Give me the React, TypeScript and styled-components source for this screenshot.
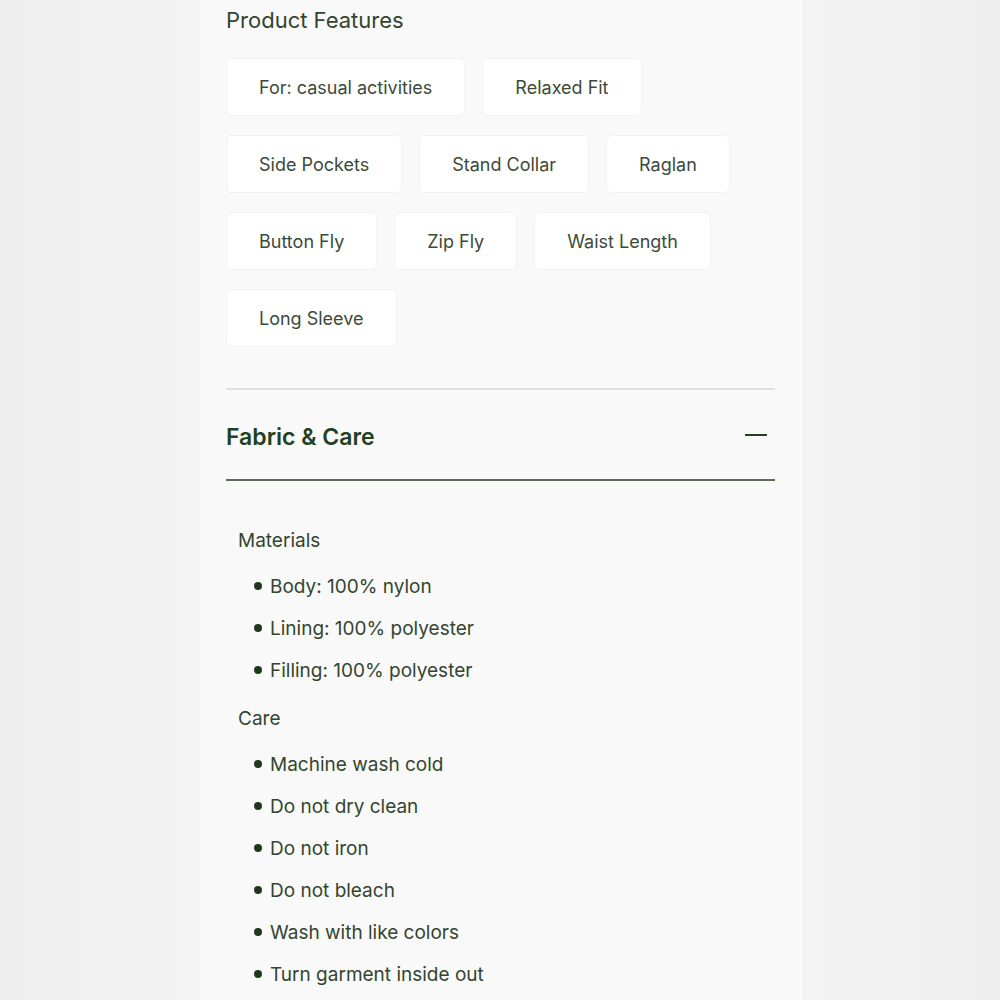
import React from "react";
import styled, { createGlobalStyle } from "styled-components";

const Global = createGlobalStyle`
  html, body { margin: 0; padding: 0; background: #f1f1f1; }
  body { font-family: "Inter", "Noto Sans", sans-serif; }
`;

const Page = styled.div`
  width: 1000px;
  height: 1000px;
  overflow: hidden;
  display: flex;
  background: linear-gradient(90deg, #eeeeee 0%, #f3f3f3 20%, #f3f3f3 80%, #eeeeee 100%);
`;

const Panel = styled.div`
  margin-left: 200px;
  width: 602px;
  box-sizing: border-box;
  padding: 4px 27px 0 26px;
  background: #f9f9f9;
`;

const SectionTitle = styled.h2`
  margin: 0 0 22px;
  font-size: 22px;
  font-weight: 400;
  line-height: 32px;
  color: #33452f;
`;

const Chips = styled.div`
  display: flex;
  flex-wrap: wrap;
  gap: 19px 17px;
  width: 530px;
`;

const Chip = styled.div`
  height: 58px;
  box-sizing: border-box;
  padding: 0 32px;
  display: flex;
  align-items: center;
  background: #ffffff;
  border: 1px solid #f2f2f2;
  border-radius: 6px;
  font-size: 18px;
  color: #3c4a39;
`;

const Divider = styled.div`
  margin-top: 41px;
  height: 2px;
  background: #e0e0e0;
`;

const AccordionHeader = styled.div`
  height: 89px;
  display: flex;
  align-items: center;
  justify-content: space-between;
  border-bottom: 2px solid #5d6b58;
`;

const AccordionTitle = styled.h3`
  margin: 0;
  font-size: 23px;
  font-weight: 600;
  color: #23401f;
  padding-top: 5px;
`;

const Minus = styled.div`
  width: 22px;
  height: 2px;
  background: #23401f;
  margin-right: 8px;
`;

const Body = styled.div`
  padding: 41px 0 0 12px;
`;

const Group = styled.div`
  margin-bottom: 9px;
`;

const GroupTitle = styled.div`
  font-size: 19px;
  line-height: 38px;
  color: #33452f;
`;

const List = styled.ul`
  margin: 5px 0 0;
  padding: 0 0 0 16px;
  list-style: none;
`;

const Item = styled.li`
  display: flex;
  align-items: center;
  gap: 8px;
  height: 42px;
  font-size: 19px;
  color: #33452f;
  &::before {
    content: "";
    width: 8px;
    height: 8px;
    border-radius: 50%;
    background: #1f3a1b;
    flex: none;
  }
`;

const features = [
  "For: casual activities",
  "Relaxed Fit",
  "Side Pockets",
  "Stand Collar",
  "Raglan",
  "Button Fly",
  "Zip Fly",
  "Waist Length",
  "Long Sleeve",
];

const groups = [
  { title: "Materials", items: ["Body: 100% nylon", "Lining: 100% polyester", "Filling: 100% polyester"] },
  {
    title: "Care",
    items: [
      "Machine wash cold",
      "Do not dry clean",
      "Do not iron",
      "Do not bleach",
      "Wash with like colors",
      "Turn garment inside out",
    ],
  },
];

export default function App() {
  return (
    <>
      <Global />
      <Page>
        <Panel>
          <SectionTitle>Product Features</SectionTitle>
          <Chips>
            {features.map((f) => (
              <Chip key={f}>{f}</Chip>
            ))}
          </Chips>
          <Divider />
          <AccordionHeader>
            <AccordionTitle>Fabric &amp; Care</AccordionTitle>
            <Minus />
          </AccordionHeader>
          <Body>
            {groups.map((g) => (
              <Group key={g.title}>
                <GroupTitle>{g.title}</GroupTitle>
                <List>
                  {g.items.map((i) => (
                    <Item key={i}>{i}</Item>
                  ))}
                </List>
              </Group>
            ))}
          </Body>
        </Panel>
      </Page>
    </>
  );
}
